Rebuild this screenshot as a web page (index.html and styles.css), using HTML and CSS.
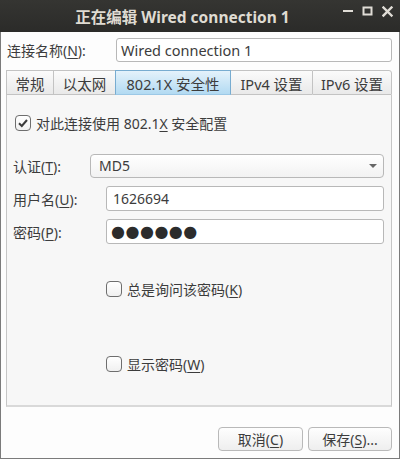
FILE: index.html
```html
<!DOCTYPE html>
<html>
<head>
<meta charset="utf-8">
<link rel="stylesheet" href="styles.css">
</head>
<body>
<div class="window">
  <div class="titlebar">
    <div class="title">正在编辑 Wired connection 1</div>
    <div class="wm-buttons">
      <svg class="wm" width="12" height="12" viewBox="0 0 12 12"><rect x="1" y="4" width="10" height="2" fill="#e0ddd6"/></svg>
      <svg class="wm" width="12" height="12" viewBox="0 0 12 12"><rect x="1.5" y="1.5" width="8" height="7" fill="none" stroke="#e0ddd6" stroke-width="2"/></svg>
      <svg class="wm" width="12" height="12" viewBox="0 0 12 12"><path d="M1.5 1.5 L9.5 9.5 M9.5 1.5 L1.5 9.5" stroke="#e0ddd6" stroke-width="2.4" stroke-linecap="square"/></svg>
    </div>
  </div>
  <div class="body">
    <div class="name-row">
      <span class="name-label">连接名称(<u>N</u>):</span>
      <div class="entry name-entry">Wired connection 1</div>
    </div>
    <div class="tabs">
      <div class="tab t1">常规</div>
      <div class="tab t2">以太网</div>
      <div class="tab t3 active">802.1X 安全性</div>
      <div class="tab t4">IPv4 设置</div>
      <div class="tab t5">IPv6 设置</div>
    </div>
    <div class="panel">
      <label class="check main-check"><span class="box checked"><svg width="12" height="12" viewBox="0 0 12 12"><path d="M2 6.2 L4.8 9 L10 3" fill="none" stroke="#3a3a3a" stroke-width="2"/></svg></span><span>对此连接使用 802.1<u>X</u> 安全配置</span></label>
      <div class="form">
        <div class="row">
          <span class="lbl lbl-auth">认证(<u>T</u>):</span>
          <div class="combo"><span>MD5</span><span class="arrow"></span></div>
        </div>
        <div class="row">
          <span class="lbl lbl-user">用户名(<u>U</u>):</span>
          <div class="entry field">1626694</div>
        </div>
        <div class="row">
          <span class="lbl lbl-user">密码(<u>P</u>):</span>
          <div class="entry field dots">●●●●●●</div>
        </div>
      </div>
      <label class="check sub-check ask"><span class="box"></span><span>总是询问该密码(<u>K</u>)</span></label>
      <label class="check sub-check show"><span class="box"></span><span>显示密码(<u>W</u>)</span></label>
    </div>
    <div class="actions">
      <div class="btn btn-cancel">取消(<u>C</u>)</div>
      <div class="btn btn-save">保存(<u>S</u>)...</div>
    </div>
  </div>
</div>
</body>
</html>
```

FILE: styles.css
```css
html, body {
  margin: 0;
  padding: 0;
  background: #fdfdfd;
}
body {
  font-family: "Noto Sans", "Noto Sans CJK SC", sans-serif;
  font-size: 14px;
  color: #3c3c3c;
}
u {
  text-decoration: underline;
  text-underline-offset: 2px;
}
.window {
  width: 400px;
  height: 459px;
  display: flex;
  flex-direction: column;
}
.titlebar {
  height: 32px;
  flex: none;
  background: linear-gradient(#353532, #2b2b29);
  display: flex;
  align-items: center;
  position: relative;
}
.title {
  width: 365px;
  text-align: center;
  font-weight: bold;
  font-size: 15.5px;
  color: #dfdbd2;
  padding-top: 1px;
}
.wm-buttons {
  position: absolute;
  right: 6px;
  top: 6px;
  display: flex;
  gap: 8px;
}
.wm { display: block; }
.body {
  flex: 1;
  border: 1px solid #7b7b7b;
  border-top: none;
  padding: 6px 7px 0 5px;
  display: flex;
  flex-direction: column;
  background: #fdfdfd;
}
.name-row {
  display: flex;
  align-items: center;
  height: 24px;
}
.name-label {
  width: 109px;
  padding-left: 1px;
}
.entry {
  box-sizing: border-box;
  background: #ffffff;
  border: 1px solid #b8b8b8;
  border-radius: 3px;
  height: 24px;
  display: flex;
  align-items: center;
  padding-left: 4px;
  color: #3c3c3c;
}
.name-entry {
  flex: 1;
  font-size: 14.5px;
}
.tabs {
  margin-top: 8px;
  display: flex;
  height: 25px;
  font-size: 14.5px;
}
.tab {
  box-sizing: border-box;
  height: 25px;
  border: 1px solid #c3c3c3;
  border-right: none;
  background: linear-gradient(#fbfbfb, #e9e9e9);
  display: flex;
  align-items: center;
  justify-content: center;
  padding-top: 1px;
}
.t1 { width: 47px; }
.t2 { width: 62px; }
.t3 { width: 116px; }
.t4 { width: 81px; }
.t5 { width: 80px; border-right: 1px solid #c3c3c3; border-radius: 0 3px 0 0; }
.tab.active {
  background: linear-gradient(#e4f2fb, #b2daf2);
  border: 1px solid #78acd0;
  border-bottom-color: #9cc8e6;
}
.tab.active + .tab { border-left: none; }
.panel {
  box-sizing: border-box;
  height: 312px;
  background: #f7f7f7;
  border: 1px solid #c6c6c6;
  border-top: none;
  border-bottom: 2px solid #d9d9d9;
  position: relative;
  display: flex;
  flex-direction: column;
  padding: 20px 7px 0 7px;
}
.check {
  display: flex;
  align-items: center;
  gap: 5px;
  height: 16px;
}
.box {
  box-sizing: border-box;
  width: 16px;
  height: 16px;
  border: 1px solid #6e6e6e;
  border-radius: 4px;
  background: linear-gradient(#ffffff, #f0f0f0);
  display: flex;
  align-items: center;
  justify-content: center;
  flex: none;
}
.main-check { margin-left: 1px; }
.form {
  margin-top: 22px;
  display: flex;
  flex-direction: column;
  gap: 8px;
}
.row {
  display: flex;
  align-items: center;
  height: 25px;
}
.lbl { flex: none; margin-left: -1px; }
.lbl-auth { width: 77px; }
.lbl-user { width: 93px; }
.combo {
  flex: 1;
  box-sizing: border-box;
  height: 24px;
  border: 1px solid #b8b8b8;
  border-radius: 4px;
  background: linear-gradient(#ffffff, #f2f2f2);
  display: flex;
  align-items: center;
  justify-content: space-between;
  padding: 0 6px 0 8px;
}
.arrow {
  width: 0;
  height: 0;
  border-left: 4px solid transparent;
  border-right: 4px solid transparent;
  border-top: 4px solid #666666;
}
.field {
  flex: 1;
  height: 25px;
  padding-left: 6px;
}
.dots {
  font-family: "DejaVu Sans", sans-serif;
  font-size: 16px;
  letter-spacing: 0.5px;
  color: #2c2c2c;
  padding-left: 4px;
}
.sub-check { margin-left: 92px; }
.ask { margin-top: 37px; }
.show { margin-top: 59px; }
.actions {
  display: flex;
  justify-content: flex-end;
  gap: 5px;
  margin-top: 20px;
}
.btn {
  box-sizing: border-box;
  height: 24px;
  border: 1px solid #b9b9b9;
  border-radius: 4px;
  background: linear-gradient(#fefefe, #eeeeee);
  display: flex;
  align-items: center;
  justify-content: center;
}
.btn-cancel { width: 85px; }
.btn-save { width: 84px; }
```
